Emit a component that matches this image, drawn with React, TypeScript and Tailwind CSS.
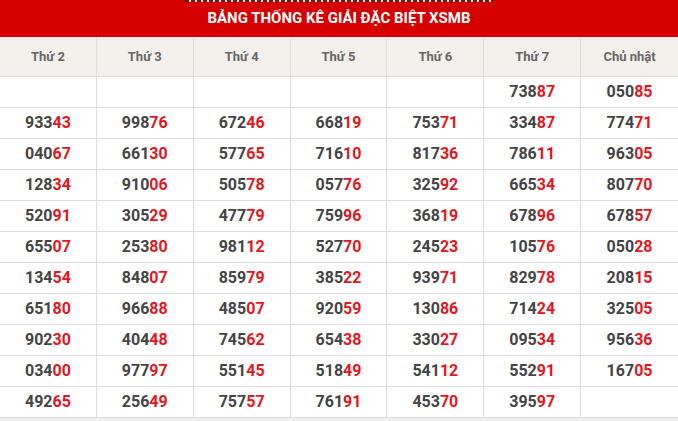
import React from 'react';

const days = ['Thứ 2', 'Thứ 3', 'Thứ 4', 'Thứ 5', 'Thứ 6', 'Thứ 7', 'Chủ nhật'];

const rows: string[][] = [
  ['', '', '', '', '', '73887', '05085'],
  ['93343', '99876', '67246', '66819', '75371', '33487', '77471'],
  ['04067', '66130', '57765', '71610', '81736', '78611', '96305'],
  ['12834', '91006', '50578', '05776', '32592', '66534', '80770'],
  ['52091', '30529', '47779', '75996', '36819', '67896', '67857'],
  ['65507', '25380', '98112', '52770', '24523', '10576', '05028'],
  ['13454', '84807', '85979', '38522', '93971', '82978', '20815'],
  ['65180', '96688', '48507', '92059', '13086', '71424', '32505'],
  ['90230', '40448', '74562', '65438', '33027', '09534', '95636'],
  ['03400', '97797', '55145', '51849', '54112', '55291', '16705'],
  ['49265', '25649', '75757', '76191', '45370', '39597', ''],
];

function Num({ value }: { value: string }) {
  if (!value) return null;
  return (
    <span>
      {value.slice(0, 3)}
      <span className="text-[#e5161d]">{value.slice(3)}</span>
    </span>
  );
}

export default function App() {
  return (
    <div className="w-[678px] h-[421px] bg-white overflow-hidden font-['Roboto',sans-serif]">
      <div className="flex flex-col items-center bg-[#d60000] h-[37px]">
        <div className="w-[308px] h-[2px] bg-[repeating-linear-gradient(90deg,#5a2020_0px,#5a2020_4px,#f0d0d0_4px,#f0d0d0_6px)]" />
        <div className="text-white font-bold text-[15px] leading-[33px]">BẢNG THỐNG KÊ GIẢI ĐẶC BIỆT XSMB</div>
      </div>
      <div className="grid grid-cols-7 bg-[#f3f0eb] h-[40px] border-b border-[#dcdcdc]">
        {days.map((d, i) => (
          <div
            key={d}
            className={`flex items-center justify-center text-[13px] font-bold text-[#666] ${i < 6 ? 'border-r border-[#dcdcdc]' : ''}`}
          >
            {d}
          </div>
        ))}
      </div>
      {rows.map((r, ri) => (
        <div key={ri} className="grid grid-cols-7 h-[31px] border-b border-[#dcdcdc]">
          {r.map((v, ci) => (
            <div
              key={ci}
              className={`flex items-center justify-center text-[16px] font-bold text-[#444] ${ci < 6 ? 'border-r border-[#dcdcdc]' : ''}`}
            >
              <Num value={v} />
            </div>
          ))}
        </div>
      ))}
      <div className="h-[4px] bg-[#f0f0f0]" />
    </div>
  );
}
